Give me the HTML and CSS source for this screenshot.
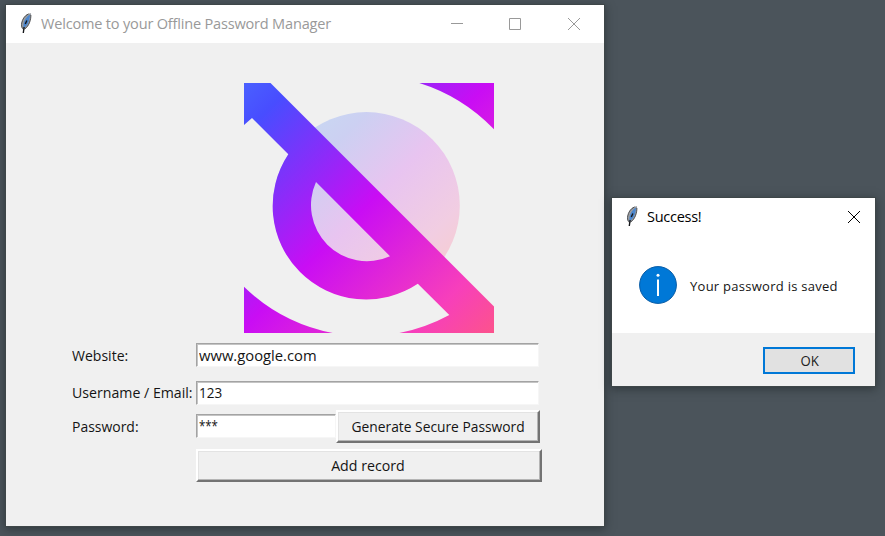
FILE: index.html
```html
<!DOCTYPE html>
<html lang="en">
<head>
<meta charset="utf-8">
<title>Offline Password Manager</title>
<link rel="stylesheet" href="styles.css">
</head>
<body>
<svg width="0" height="0" class="defs">
  <symbol id="feather" viewBox="0 0 14 22">
    <path d="M12 1.300C9.200.8 6.200 3 4 7c-1.600 3.200-2.100 6-1.200 9.200l1.500 1.800c4-1.800 6.400-6 7.200-10.700.4-2.200.7-4.400.5-6z" fill="#9b9da0"/>
    <path d="M11.200 2.500C8 4 5.500 7.500 4.500 12l-.1 4.500c3.400-2.300 5.200-5.500 6-9.500z" fill="#4a86cf"/>
    <path d="M9.500 1.900C5.500 3.600 3.300 7.500 2.700 11c-.4 2.200-.2 3.800.8 5.500M11.900 3c.1 4.800-1.800 11-6.200 14" fill="none" stroke="#33363a" stroke-width=".8"/>
    <path d="M7.900 8.500L6.300 12M5.100 15L4.300 21" fill="none" stroke="#15171a" stroke-width="1.400"/>
  </symbol>
</svg>
<main class="desktop">
  <section class="window app">
    <header class="titlebar">
      <svg class="feather" width="14" height="22"><use href="#feather"/></svg>
      <h1 class="title">Welcome to your Offline Password Manager</h1>
      <div class="controls">
        <svg width="12" height="12"><path d="M0 5.500H12" class="stroke"/></svg>
        <svg width="12" height="12"><path d="M.5.5h11v11H.5z" class="stroke"/></svg>
        <svg width="12" height="12"><path d="M0 0L12 12M12 0L0 12" class="stroke"/></svg>
      </div>
    </header>
    <svg class="logo" width="250" height="250" viewBox="0 0 250 250">
      <defs>
        <linearGradient id="neon" gradientUnits="userSpaceOnUse" x1="0" y1="0" x2="250" y2="250">
          <stop offset="0" stop-color="#4a60ff"/>
          <stop offset=".1" stop-color="#484dff"/>
          <stop offset=".49" stop-color="#c90df4"/>
          <stop offset=".84" stop-color="#f73fbb"/>
          <stop offset="1" stop-color="#fc538c"/>
        </linearGradient>
        <linearGradient id="pale" gradientUnits="userSpaceOnUse" x1="56" y1="56" x2="189" y2="189">
          <stop offset="0" stop-color="#c9d6f2"/>
          <stop offset=".15" stop-color="#ccd0f2"/>
          <stop offset=".5" stop-color="#e8c4f0"/>
          <stop offset=".85" stop-color="#f1cde2"/>
          <stop offset="1" stop-color="#f5cdd6"/>
        </linearGradient>
      </defs>
      <circle cx="122.400" cy="122.500" r="93.400" fill="url(#pale)"/>
      <g fill="url(#neon)">
        <path d="M0 0H26.500L250 223.500V250H155.300A175 175 0 0 0 205.300 232L173.800 200.800A93.400 93.400 0 0 1 44.300 71.300L8 35L0 42ZM72 99A56 56 0 0 0 146 173.200Z"/>
        <path d="M175.300 0H250V46.300A177.600 177.600 0 0 0 175.300 0Z"/>
        <path d="M0 203.700A175 175 0 0 0 88.700 250H0Z"/>
      </g>
    </svg>
    <form class="form">
      <label class="row r1"><span class="label"><span class="t-web">Website:</span></span><span class="field"><span class="t-url">www.google.com</span></span></label>
      <label class="row r2"><span class="label"><span class="t-user">Username / Email:</span></span><span class="field"><span class="t-num">123</span></span></label>
      <div class="row r3"><span class="label"><span class="t-pass">Password:</span></span><span class="field short"><span class="t-stars">***</span></span><button type="button" class="btn gen"><span class="t-gen">Generate Secure Password</span></button></div>
      <button type="button" class="btn add"><span class="t-add">Add record</span></button>
    </form>
  </section>
  <section class="window dialog">
    <header class="titlebar">
      <svg class="feather" width="14" height="22"><use href="#feather"/></svg>
      <h2 class="title">Success!</h2>
      <svg class="close" width="12" height="12"><path d="M0 0L12 12M12 0L0 12" class="stroke"/></svg>
    </header>
    <div class="message">
      <svg width="38" height="38"><circle cx="19" cy="19" r="18.400" fill="#0078d7" stroke="#075ba5"/><path d="M19 13.500V30" stroke="#fff" stroke-width="2"/><circle cx="19" cy="9.300" r="1.500" fill="#fff"/></svg>
      <p class="t-msg">Your password is saved</p>
    </div>
    <footer class="actions"><button type="button" class="ok"><span class="t-ok">OK</span></button></footer>
  </section>
</main>
</body>
</html>
```
FILE: styles.css
```css
* { box-sizing: border-box; }
body {
  margin: 0;
  font: 15px/20px "Open Sans", "Noto Sans", sans-serif;
  color: #141414;
  background: #4b545b;
  overflow: hidden;
}
.defs { position: absolute; }
.desktop {
  display: flex;
  align-items: flex-start;
  gap: 8px;
  height: 536px;
  padding: 5px 0 0 6px;
}
.window { background: #f0f0f0; box-shadow: 0 0 0 1px #3e4648, 0 2px 9px 1px rgba(20, 28, 28, .5); }
.app { width: 598px; height: 521px; display: flex; flex-direction: column; }
.titlebar { display: flex; align-items: center; height: 38px; padding-left: 13px; background: #fff; }
.feather { margin-top: -2px; }
.title { margin: -2px 0 0 8px; font-size: 15px; font-weight: 400; white-space: nowrap; transform-origin: left; }
.app .title { color: #999; letter-spacing: -.2px; transform: scaleX(.97); }
.stroke { fill: none; stroke: #999; }
.controls { display: flex; gap: 46px; margin-left: auto; margin-right: 24px; }
.controls svg:nth-child(2) { margin-right: 1px; }
.logo { display: block; margin: 40px 0 0 238px; flex: none; }
.form { margin: 10px 0 0 66px; }
.row { display: flex; align-items: center; }
.form span, .t-msg, .t-ok { white-space: nowrap; }
.label { width: 124px; flex: none; }
.label span, .field span, .btn span, .t-msg, .t-ok { display: inline-block; }
.label span, .field span { transform-origin: left; }
.t-web { transform: scaleX(.935); }
.t-user { transform: scaleX(.943); }
.t-pass { transform: scaleX(.93); }
.t-url { transform: scaleX(.985); }
.t-num { transform: scaleX(.9); }
.t-stars { transform: scaleX(.76); }
.t-gen { transform: scaleX(.92); }
.t-add { transform: scaleX(.945); }
.r2 .label, .r3 .label { margin-top: -2px; }
.btn span { vertical-align: top; }
.field {
  width: 343px;
  height: 24px;
  padding: 0 0 0 2px;
  background: #fff;
  border: 1px solid;
  border-color: #a3a3a3 #f6f6f6 #f6f6f6 #a3a3a3;
  box-shadow: inset 1px 1px #c4c4c4;
  line-height: 22px;
}
.r2 .field, .r3 .field { line-height: 21px; }
.r1 { height: 24px; }
.r2 { height: 24px; margin-top: 14px; }
.r3 { height: 33px; margin-top: 5px; }
.short { width: 140px; margin-top: -1px; }
.btn {
  font: inherit;
  color: inherit;
  padding: 0 0 1px;
  background: #f0f0f0;
  border: 2px solid;
  border-color: #fff #737373 #737373 #fff;
  box-shadow: inset -1px -1px #b5b5b5, inset 1px 1px #e3e3e3;
}
.gen { width: 204px; height: 33px; }
.add { display: block; width: 346px; height: 33px; margin: 6px 0 0 124px; padding-right: 2px; }
.dialog { width: 263px; height: 188px; margin-top: 193px; }
.dialog .title { color: #000; letter-spacing: -.3px; transform: scaleX(.97); }
.dialog .stroke { stroke: #000; }
.close { margin-left: auto; margin-right: 15px; }
.message { display: flex; align-items: center; gap: 13px; height: 97px; padding-left: 27px; background: #fff; }
.t-msg { margin: 2px 0 0; font-size: 13px; letter-spacing: .27px; transform-origin: left; }
.actions { display: flex; height: 53px; justify-content: flex-end; padding: 14px 20px 0 0; }
.ok { width: 92px; height: 27px; padding: 1px 0 0 1px; font: inherit; font-size: 14px; color: #222; background: #e1e1e1; border: 2px solid #0078d7; }
.t-ok { transform: scaleX(.94); }
```
